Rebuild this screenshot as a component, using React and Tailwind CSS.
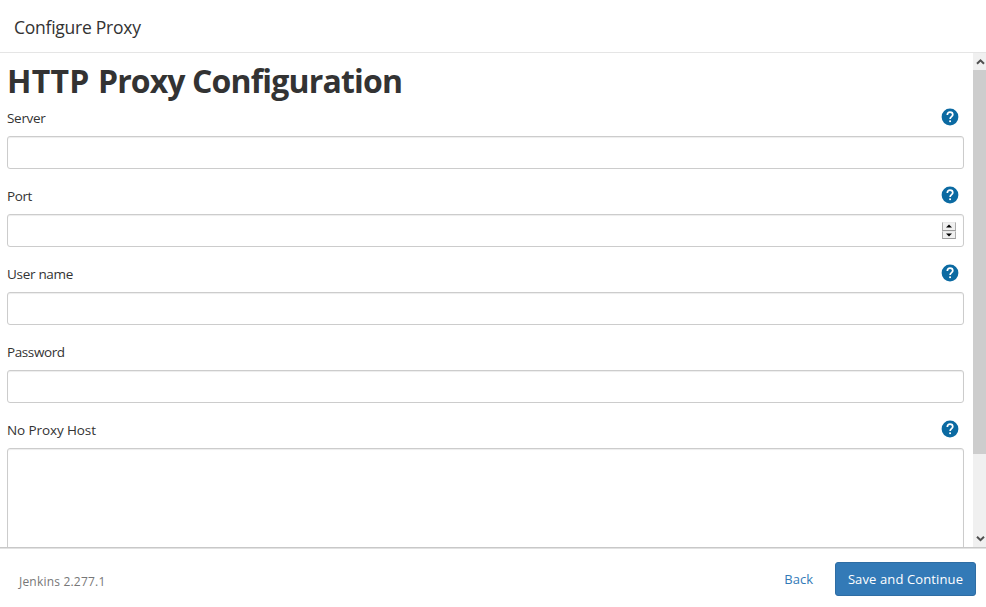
const fields = [
  { label: 'Server', help: true, tracking: 'tracking-[-0.3px]' },
  { label: 'Port', help: true, spinner: true, tracking: 'tracking-[-0.4px]' },
  { label: 'User name', help: true, tracking: 'tracking-[-0.3px]' },
  { label: 'Password', help: false, tracking: 'tracking-[-0.4px]' },
  { label: 'No Proxy Host', help: true, area: true, tracking: 'tracking-[-0.1px]' },
];

function HelpIcon() {
  return (
    <svg className="mt-[-1px] mr-[5px] h-[18px] w-[18px]" viewBox="0 0 18 18" fill="none">
      <circle cx="9" cy="9" r="8.4" fill="#0b6aa2" />
      <path d="M6.3 7C6.3 5.2 7.4 4.2 9 4.2S11.8 5.2 11.8 6.7C11.8 8.6 9.1 8.8 9.1 11" stroke="#fff" strokeWidth="1.7" />
      <rect x="8.2" y="12.4" width="1.8" height="1.7" fill="#fff" />
    </svg>
  );
}

function Spinner() {
  return (
    <div className="flex h-[17px] w-[14px] flex-col">
      {['M7 2.4 L10 5.6 H4 Z', 'M7 5.6 L4 2.4 H10 Z'].map((d) => (
        <div key={d} className="h-[8.5px] border border-[#acacac] border-t-[#e8e8e8] border-b-[#9c9c9c] bg-[#f0f0f0]">
          <svg className="-mt-px -ml-px block h-2 w-[14px]" viewBox="0 0 14 8">
            <path d={d} fill="#000" />
          </svg>
        </div>
      ))}
    </div>
  );
}

function Field({ label, help, spinner, area, tracking }) {
  return (
    <div className={area ? 'h-[226px] shrink-0' : 'h-[78px] shrink-0'}>
      <div className="flex h-[27px] items-start justify-between">
        <label className={'text-[13.5px] leading-[19px] text-[#333] ' + tracking}>{label}</label>
        {help && <HelpIcon />}
      </div>
      <div
        className={
          'flex items-center justify-end rounded-[3px] border border-[#ccc] bg-white pr-[7px] shadow-[inset_0_1px_1px_rgba(0,0,0,0.075)] ' +
          (area ? 'h-[180px]' : 'h-[33px]')
        }
      >
        {spinner && <Spinner />}
      </div>
    </div>
  );
}

function Scrollbar() {
  return (
    <div className="flex w-[13px] shrink-0 flex-col bg-[#f0f0f0]">
      <svg className="h-[17px] w-[13px] shrink-0" viewBox="0 0 13 17" fill="none">
        <path d="M4 10.8 L7.5 7.3 L11 10.8" stroke="#505050" strokeWidth="2" />
      </svg>
      <div className="h-[384px] bg-[#cdcdcd]" />
      <div className="flex-1" />
      <svg className="h-[17px] w-[13px] shrink-0" viewBox="0 0 13 17" fill="none">
        <path d="M4 6.7 L7.5 10.2 L11 6.7" stroke="#505050" strokeWidth="2" />
      </svg>
    </div>
  );
}

export default function App() {
  return (
    <div className="flex h-[607px] w-[986px] flex-col overflow-hidden bg-white font-['Open_Sans','Noto_Sans',sans-serif] text-[#333]">
      <header className="flex h-[53px] shrink-0 items-center border-b border-[#e5e5e5] pl-[14px]">
        <h4 className="mt-[2px] text-[17.5px] leading-[26px] tracking-[-0.25px]">Configure Proxy</h4>
      </header>
      <main className="flex h-[494px] shrink-0 overflow-hidden">
        <div className="flex w-[973px] flex-col overflow-hidden pr-[9px] pl-[7px]">
          <h1 className="h-[56px] shrink-0 pt-[6px] text-[32px] leading-[44px] font-bold whitespace-nowrap">
            <span className="tracking-[0.2px]">HTTP </span>
            <span className="tracking-[-0.9px]">Proxy </span>
            <span className="tracking-[-0.82px]">Configuration</span>
          </h1>
          {fields.map((f) => (
            <Field key={f.label} {...f} />
          ))}
        </div>
        <Scrollbar />
      </main>
      <footer className="flex h-[60px] shrink-0 items-center border-t border-[#c8c8c8] pr-[10px] pl-[19px] shadow-[inset_0_1px_0_#e2e2e2]">
        <span className="pt-[8px] text-[12px] tracking-[0.2px] text-[#777]">Jenkins 2.277.1</span>
        <button className="mt-[4px] mr-[22px] ml-auto text-[13px] text-[#337ab7]">Back</button>
        <button className="mt-[3px] h-[34px] w-[141px] rounded-[3px] border border-[#2e6da4] bg-[#337ab7] pt-[2px] text-[13px] tracking-[0.12px] whitespace-nowrap text-white">Save and Continue</button>
      </footer>
    </div>
  );
}
